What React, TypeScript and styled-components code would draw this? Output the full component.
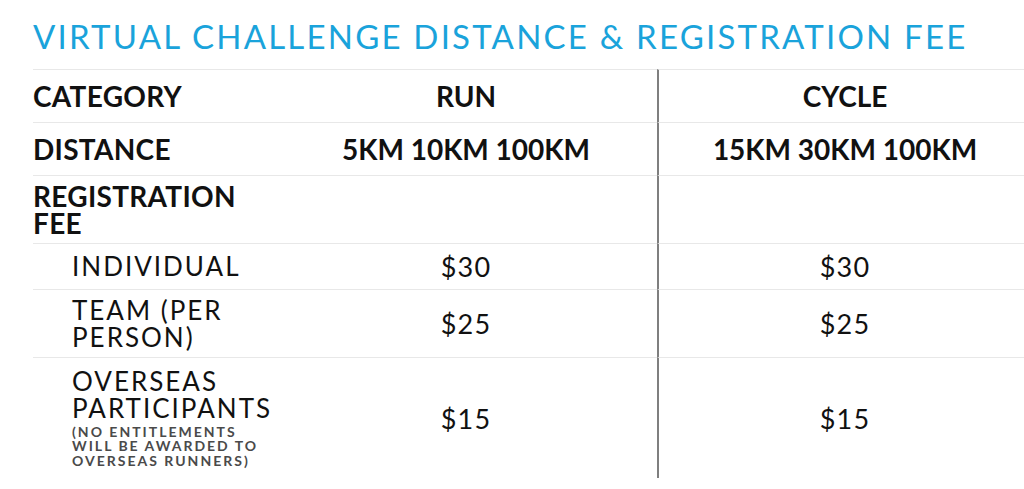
import React from "react";
import styled, { createGlobalStyle } from "styled-components";

const Global = createGlobalStyle`
  html, body { margin: 0; padding: 0; background: #fff; overflow: hidden; }
  body { font-family: Lato, "Open Sans", sans-serif; color: #111; }
`;

const Page = styled.div`
  width: 1024px;
  height: 489px;
  overflow: hidden;
  padding-left: 33px;
  box-sizing: border-box;
`;

const Title = styled.h1`
  margin: 0;
  padding-top: 16px;
  height: 69px;
  box-sizing: border-box;
  font-family: Lato, sans-serif;
  font-weight: 400;
  font-size: 33px;
  line-height: 40px;
  letter-spacing: 2.2px;
  color: #1aa3db;
  white-space: nowrap;
`;

const Table = styled.div`
  width: 998px;
  display: grid;
  grid-template-columns: 242px 382px 374px;
`;

const Row = styled.div<{ $h: number }>`
  display: contents;
  & > * {
    height: ${(p) => p.$h}px;
    border-top: 1px solid #e8e8e8;
  }
`;

const Label = styled.div<{ $indent?: boolean; $light?: boolean }>`
  display: flex;
  flex-direction: column;
  justify-content: center;
  box-sizing: border-box;
  padding-left: ${(p) => (p.$indent ? 39 : 0)}px;
  font-size: ${(p) => (p.$light ? 26 : 28)}px;
  font-weight: ${(p) => (p.$light ? 400 : 700)};
  letter-spacing: ${(p) => (p.$light ? 2 : 0.3)}px;
  line-height: 27px;
  text-transform: uppercase;
  white-space: pre-line;
`;

const Note = styled.span`
  display: block;
  margin-top: 3px;
  font-size: 14px;
  font-weight: 700;
  letter-spacing: 2px;
  line-height: 14.5px;
  color: #4a4a4a;
`;

const Cell = styled.div<{ $split?: boolean; $bold?: boolean }>`
  display: flex;
  align-items: center;
  justify-content: center;
  box-sizing: border-box;
  border-left: ${(p) => (p.$split ? "2px solid #7f7f7f" : "none")};
  font-size: ${(p) => (p.$bold ? 28 : 27)}px;
  font-weight: ${(p) => (p.$bold ? 700 : 400)};
  letter-spacing: ${(p) => (p.$bold ? 0 : 1.2)}px;
  white-space: nowrap;
`;

type R = {
  h: number;
  label: string;
  note?: string;
  indent?: boolean;
  run: string;
  cycle: string;
  bold?: boolean;
};

const rows: R[] = [
  { h: 53, label: "CATEGORY", run: "RUN", cycle: "CYCLE", bold: true },
  { h: 53, label: "DISTANCE", run: "5KM 10KM 100KM", cycle: "15KM 30KM 100KM", bold: true },
  { h: 68, label: "REGISTRATION\nFEE", run: "", cycle: "", bold: true },
  { h: 46, label: "INDIVIDUAL", indent: true, run: "$30", cycle: "$30" },
  { h: 68, label: "TEAM (PER\nPERSON)", indent: true, run: "$25", cycle: "$25" },
  {
    h: 121,
    label: "OVERSEAS\nPARTICIPANTS",
    note: "(NO ENTITLEMENTS\nWILL BE AWARDED TO\nOVERSEAS RUNNERS)",
    indent: true,
    run: "$15",
    cycle: "$15",
  },
];

export default function App() {
  return (
    <Page>
      <Global />
      <Title>VIRTUAL CHALLENGE DISTANCE &amp; REGISTRATION FEE</Title>
      <Table>
        {rows.map((r, i) => (
          <Row key={i} $h={r.h}>
            <Label $indent={r.indent} $light={r.indent}>
              {r.label}
              {r.note && <Note>{r.note}</Note>}
            </Label>
            <Cell $bold={r.bold}>{r.run}</Cell>
            <Cell $bold={r.bold} $split>
              {r.cycle}
            </Cell>
          </Row>
        ))}
      </Table>
    </Page>
  );
}
